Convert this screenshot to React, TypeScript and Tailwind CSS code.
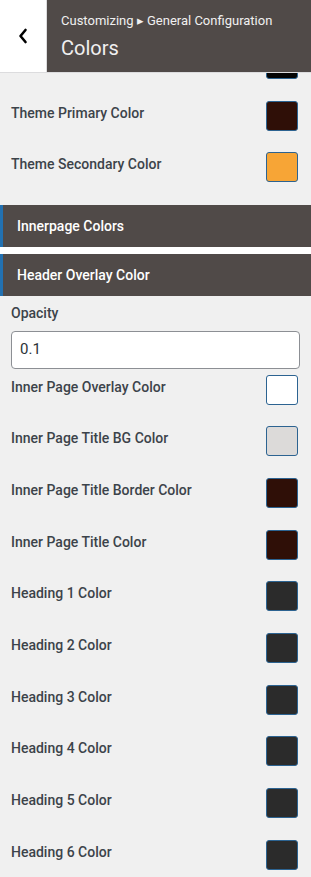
import React from "react";

const Swatch = ({ color }: { color: string }) => (
  <div
    className="h-[30px] w-[32px] shrink-0 rounded-[3px] border border-[#2c6391]"
    style={{ backgroundColor: color }}
  />
);

const Row = ({ label, color }: { label: string; color: string }) => (
  <div className="flex h-[51.7px] items-start justify-between pl-[11px] pr-[13px]">
    <span className="mt-[2px] text-[14px] font-medium leading-5 text-[#3c434a]">{label}</span>
    <Swatch color={color} />
  </div>
);

const Bar = ({ label }: { label: string }) => (
  <div className="flex h-[42px] items-center border-l-[3px] border-[#2271b1] bg-[#504a48] pl-[14px]">
    <span className="text-[14px] font-medium text-white">{label}</span>
  </div>
);

export default function App() {
  const headings = [1, 2, 3, 4, 5, 6];
  return (
    <div
      className="flex h-[877px] w-[311px] flex-col overflow-hidden bg-[#f0f0f0]"
      style={{ fontFamily: "Roboto, 'Liberation Sans', sans-serif" }}
    >
      <div className="relative z-10 flex h-[73px] shrink-0 border-b border-[#dcdcde]">
        <div className="flex w-[47px] items-center justify-center border-r border-[#dcdcde] bg-white">
          <svg width="10" height="16" viewBox="0 0 10 16" fill="none">
            <path d="M7.5 2 L2.5 8 L7.5 14" stroke="#000" strokeWidth="2.6" strokeLinecap="round" strokeLinejoin="round" />
          </svg>
        </div>
        <div className="flex flex-1 flex-col bg-[#504a48] pl-[14px] pt-[13px]">
          <div className="text-[13px] leading-4 text-[#f0f0f0]">Customizing ▸ General Configuration</div>
          <div className="mt-[7px] text-[20px] leading-6 text-[#f0f0f0]">Colors</div>
        </div>
      </div>
      <div className="flex-1 overflow-hidden">
        <div className="-mt-[24px]">
          <Row label="" color="#050505" />
          <Row label="Theme Primary Color" color="#2f0f07" />
          <Row label="Theme Secondary Color" color="#f7a536" />
          <div className="mt-px bg-white">
            <Bar label="Innerpage Colors" />
            <div className="h-[7px]" />
            <Bar label="Header Overlay Color" />
          </div>
          <div className="px-[11px] pt-[7px]">
            <div className="text-[14px] font-medium leading-5 text-[#3c434a]">Opacity</div>
            <div className="mt-[7.5px] flex h-[38px] items-center rounded-[4px] border border-[#8c8f94] bg-white px-[8px] text-[15px] text-[#2c3338]">
              0.1
            </div>
          </div>
          <div className="mt-[6px]">
            <Row label="Inner Page Overlay Color" color="#ffffff" />
            <Row label="Inner Page Title BG Color" color="#dcdad9" />
            <Row label="Inner Page Title Border Color" color="#2f0f07" />
            <Row label="Inner Page Title Color" color="#2f0f07" />
            {headings.map((h) => (
              <Row key={h} label={`Heading ${h} Color`} color="#2b2b2b" />
            ))}
          </div>
        </div>
      </div>
    </div>
  );
}
